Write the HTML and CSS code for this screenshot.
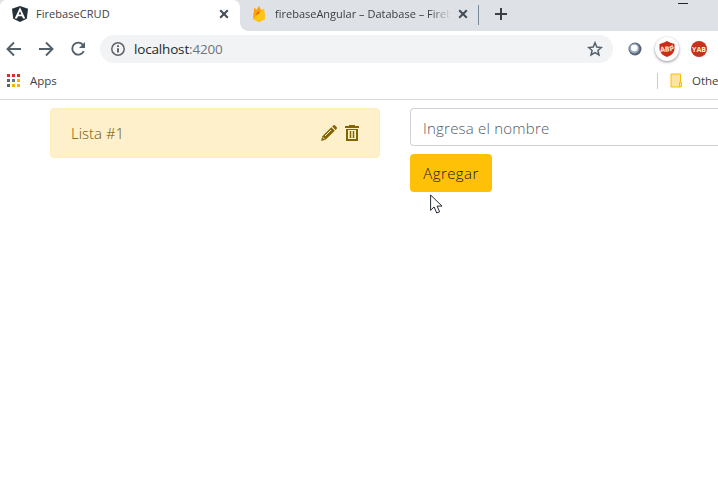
FILE: index.html
```html
<!DOCTYPE html>
<html lang="es">
<head>
<meta charset="utf-8">
<title>FirebaseCRUD</title>
<link rel="stylesheet" href="styles.css">
</head>
<body>
<header class="browser">
  <div class="tabs">
    <div class="tab tab-active">
      <svg class="favicon" width="16" height="16" viewBox="0 0 16 16"><path fill="#263038" d="M8 0l8 2.700-1.200 10L8 16l-6.800-3.300L0 2.700z"/><path fill="#fff" fill-rule="evenodd" d="M8 1.200L2.700 12.500H5l1-2.300h4l1 2.300h2.300zM8 5.200l1.400 3.200H6.600z"/></svg>
      <span class="title t1">FirebaseCRUD</span>
      <svg class="close" width="10" height="10" viewBox="0 0 10 10"><path d="M1.200 1.200l7.600 7.600M8.800 1.200L1.200 8.800"/></svg>
    </div>
    <div class="tab tab-second">
      <svg class="favicon" width="14" height="16" viewBox="0 0 14 16"><path fill="#ffa000" d="M1 13L2.300 1.500 4.500 4 7 0l2 4 3-1 1 10-6 3z"/><path fill="#ffc515" d="M1 13L9.500 4.500 12 3l1 10-6 3z"/><path fill="#e65122" d="M4 9l1.300-2.500L7.500 5.500 7 7.500z"/></svg>
      <span class="title t2">firebaseAngular – Database – Fireb</span>
      <svg class="close" width="10" height="10" viewBox="0 0 10 10"><path d="M1.200 1.200l7.600 7.600M8.800 1.200L1.200 8.800"/></svg>
    </div>
    <i class="tab-line"></i>
    <svg class="plus" width="12" height="12" viewBox="0 0 12 12"><path d="M6 0v12M0 6h12" stroke="#3c4043" stroke-width="2"/></svg>
    <i class="minimize"></i>
  </div>
  <div class="toolbar">
    <svg class="nav" width="16" height="16" viewBox="0 0 16 16"><path d="M15 8H2M8 1.500L1.500 8 8 14.500"/></svg>
    <svg class="nav" width="16" height="16" viewBox="0 0 16 16"><path d="M1 8h13M8 1.500L14.500 8 8 14.500"/></svg>
    <svg class="nav" width="16" height="16" viewBox="0 0 16 16"><path d="M13.200 4.200A6 6 0 1 0 13.800 10"/><path class="solid" d="M15 1v6H9z"/></svg>
    <div class="address">
      <svg width="14" height="14" viewBox="0 0 14 14"><circle cx="7" cy="7" r="6.200" fill="none" stroke="#5f6368" stroke-width="1.500"/><path d="M7 6.200v4.300M7 3.300v1.700" stroke="#4a4e54" stroke-width="1.700"/></svg>
      <span class="url">localhost<span class="port">:4200</span></span>
      <svg class="star" width="16" height="16" viewBox="0 0 16 16"><path d="M8 1.800l1.800 4.300 4.600.4-3.500 3 1.100 4.500L8 11.600 4 14l1.100-4.500-3.500-3 4.600-.4z" fill="none" stroke="#53606e" stroke-width="1.500"/></svg>
    </div>
    <svg class="orb" width="14" height="14" viewBox="0 0 14 14"><circle cx="7" cy="7" r="6.500" fill="#566474"/><circle cx="6.300" cy="6.500" r="5" fill="#9aacbd"/><circle cx="6.300" cy="6" r="3.300" fill="#fff"/></svg>
    <span class="blocker"><svg width="16" height="16" viewBox="0 0 16 16"><path fill="#cb2e18" d="M8 0l3 1.500L15.500 3v5q0 5-7.500 8Q.5 13 .5 8V3L5 1.500z"/><text x="8" y="10.500" text-anchor="middle" class="badge-text" transform="rotate(-5 8 8)">ABP</text><path d="M2 11L14 4" stroke="#f6c6ae" stroke-width=".8"/></svg></span>
    <svg class="yab" width="16" height="16" viewBox="0 0 16 16"><circle cx="8" cy="8" r="8" fill="#c8321c"/><text x="8" y="10.500" text-anchor="middle" class="badge-text">YAB</text></svg>
  </div>
  <div class="bookmarks">
    <div class="apps"><i class="r"></i><i class="r"></i><i class="r"></i><i class="g"></i><i class="b"></i><i class="y"></i><i class="g"></i><i class="y"></i><i class="y"></i></div>
    <span class="apps-label">Apps</span>
    <div class="other">
      <svg width="13" height="15" viewBox="0 0 13 15"><path d="M1 1h9.500v13H1z" fill="#fde4a6" stroke="#fbbc04"/><path d="M9.500 9.500h2v4h-2z" fill="#fde4a6" stroke="#fbbc04"/></svg>
      <span>Othe</span>
    </div>
  </div>
</header>
<main class="content">
  <section class="alert">
    <span class="item">Lista #1</span>
    <svg width="16" height="16" viewBox="0 0 16 16"><path fill="#856404" d="M10.300 2.200l3.500 3.500-9.300 9L0 16l1.300-4.700zM11.200 1.400l.9-.9q1-1 2 0l1.400 1.400q1 1 0 2l-1 1z"/><path stroke="#fff3cd" d="M4 11l6-6M1.700 12.300l2 2"/></svg>
    <svg class="trash" width="14" height="16" viewBox="0 0 14 16"><path fill="#856404" fill-rule="evenodd" d="M4 0h6v1h4v2H0V1h4zM1 4h12v12H1zM3 5v9h8V5z"/><path stroke="#856404" stroke-width="1.500" d="M5.500 6v7M8.500 6v7"/></svg>
  </section>
  <form class="form">
    <input type="text" placeholder="Ingresa el nombre">
    <button type="button">Agregar</button>
    <svg class="cursor" width="13" height="20" viewBox="0 0 13 20"><path d="M.6 1v15.300l3.500-3.400 2.600 6.100 2.900-1.200-2.500-5.700H12z" fill="#fff" stroke="#252936"/></svg>
  </form>
</main>
</body>
</html>
```

FILE: styles.css
```css
* { box-sizing: border-box; }
body { margin: 0; width: 718px; height: 497px; overflow: hidden; background: #fff; font-family: "Open Sans", sans-serif; color: #3c4043; }
svg { display: block; flex: none; }
.browser { height: 100px; border-bottom: 1px solid #d9dbdf; }
.tabs { display: flex; height: 31px; background: #dee1e6; }
.tab { display: flex; align-items: center; height: 31px; padding: 0 12px 3px; flex: none; }
.tab-active { width: 240px; background: #fff; border-radius: 6px 7px 0 0; padding-right: 11px; }
.tab-second { width: 238px; position: relative; padding-right: 10px; }
.tab-second::before { content: ""; position: absolute; left: 0; bottom: 0; width: 8px; height: 8px; background: radial-gradient(circle at 8px 0, #dee1e6 7.500px, #fff 8px); }
.title { font-size: 11px; line-height: 16px; white-space: nowrap; margin-left: 8px; }
.t1 { letter-spacing: .05px; }
.t2 { margin-left: 9px; width: 176px; overflow: hidden; -webkit-mask-image: linear-gradient(to right, #000 88%, transparent); mask-image: linear-gradient(to right, #000 88%, transparent); }
.close { margin-left: auto; fill: none; stroke: #414c56; stroke-width: 2; }
.tab-line { width: 1px; height: 20px; margin-top: 5px; background: #76899a; }
.plus { margin: 8px 0 0 16px; }
.minimize { width: 10px; height: 1px; margin: 3px 0 0 171px; background: #22252a; }
.toolbar { display: flex; align-items: center; height: 36px; padding-left: 6px; }
.nav { margin-right: 16px; fill: none; stroke: #53606a; stroke-width: 1.900; }
.nav:nth-child(3) { margin-right: 14px; }
.nav .solid { fill: #53606a; stroke: none; }
.address { display: flex; align-items: center; width: 513px; height: 28px; border-radius: 14px; background: #f1f3f4; padding: 0 10px 0 11px; flex: none; }
.url { margin-left: 9px; font-size: 13.500px; color: #25282c; letter-spacing: -.17px; line-height: 20px; }
.port { color: #70757a; }
.star { margin-left: auto; }
.orb { margin-left: 15px; }
.blocker { display: flex; align-items: center; justify-content: center; width: 24px; height: 24px; margin-left: 13px; border-radius: 50%; background: #fff; box-shadow: 0 1px 3px #8b929b; flex: none; }
.yab { margin-left: 12px; }
.badge-text { font: 700 7px "Open Sans", sans-serif; fill: #fff0cf; }
.bookmarks { display: flex; align-items: center; height: 27px; padding-left: 7px; }
.apps { display: grid; grid-template-columns: repeat(3, 3px); gap: 2px; }
.apps i { height: 3px; }
.r { background: #d93025; }
.g { background: #5f6368; }
.b { background: #667b91; }
.y { background: #fbb004; }
.apps-label { margin-left: 10px; font-size: 11.500px; }
.other { display: flex; align-items: center; height: 16px; margin-left: auto; width: 61px; border-left: 1px solid #c9ccd0; padding-left: 12px; font-size: 11.500px; white-space: nowrap; overflow: hidden; }
.other span { margin-left: 9px; }
.content { display: flex; padding: 8px 0 0 50px; font-size: 15px; }
.alert { display: flex; align-items: center; width: 330px; height: 50px; padding: 0 20px; border: 1px solid #ffeeba; border-radius: 4px; background: #fdf0cb; color: #725300; flex: none; }
.item { margin-right: auto; font-weight: 300; }
.trash { margin-left: 8px; }
.form { position: relative; margin-left: 30px; flex: 1; }
input { display: block; width: 100%; height: 38px; padding: 2px 12px 0; border: 1px solid #ced4da; border-right: 0; border-radius: 4px 0 0 4px; font: 300 15px "Open Sans", sans-serif; letter-spacing: .22px; }
input::placeholder { color: #505a64; opacity: 1; }
button { display: block; width: 82px; height: 38px; margin-top: 8px; padding: 0; border: 0; border-radius: 4px; background: #ffc107; color: #15181b; font: 300 15px "Open Sans", sans-serif; letter-spacing: .4px; }
.cursor { position: absolute; left: 20px; top: 86px; }
```
